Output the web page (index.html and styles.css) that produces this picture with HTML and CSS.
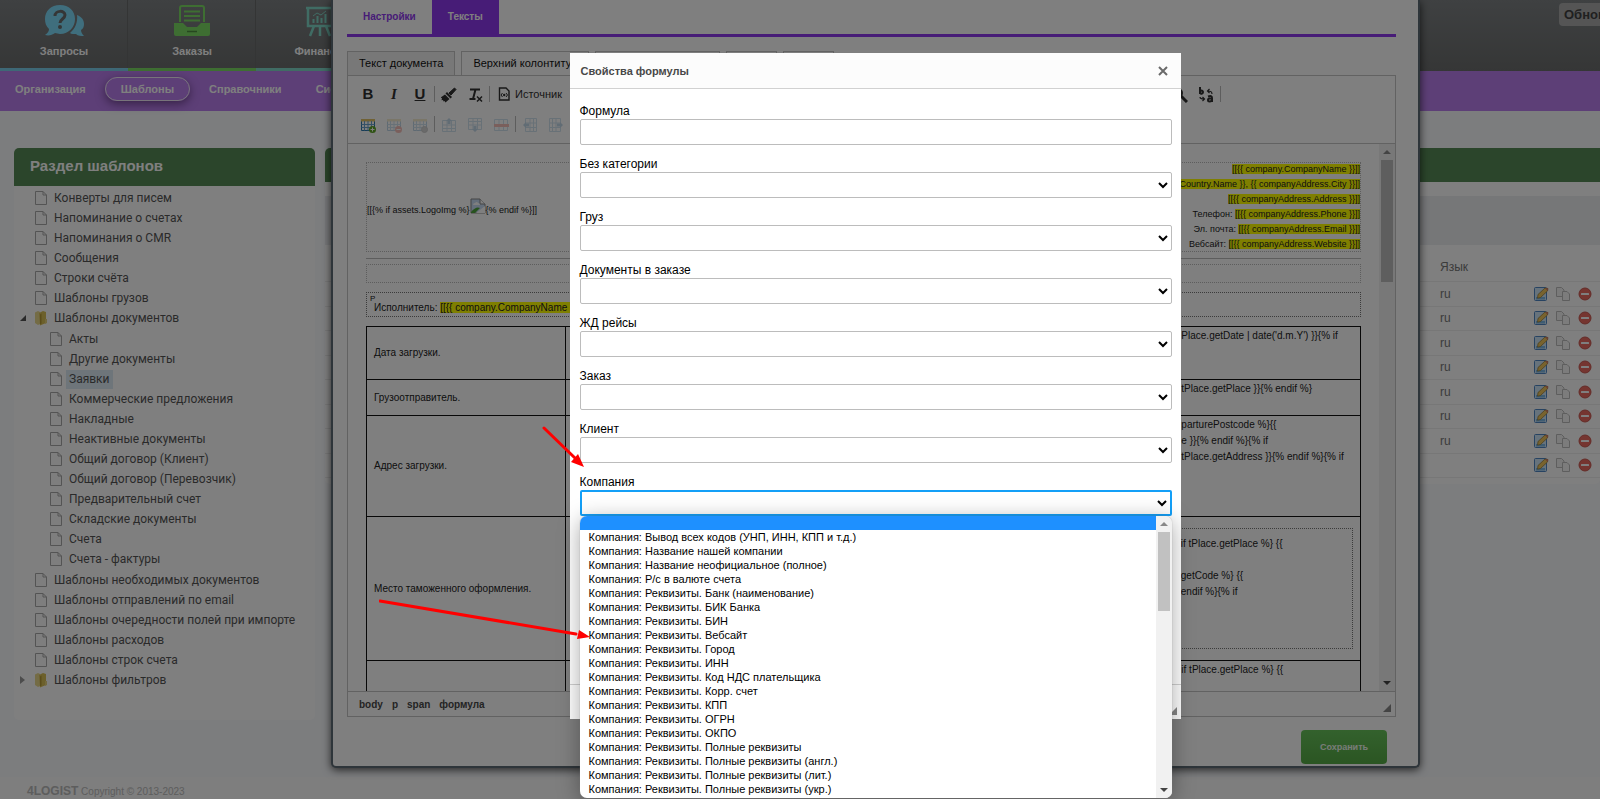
FILE: index.html
```html
<!DOCTYPE html>
<html lang="ru">
<head>
<meta charset="UTF-8">
<meta name="viewport" content="width=device-width, initial-scale=1.0">
<title>4LOGIST - Шаблоны</title>
<link rel="stylesheet" href="styles.css">
</head>
<body>

<!-- icons -->
<svg class="sprite" width="0" height="0" aria-hidden="true">
  <symbol id="i-file" viewBox="0 0 14 16">
    <path d="M1.500 1.500h7.500l3.500 3.500v9.500h-11z" fill="#fdfdfd" stroke="#a8a8a8"/>
    <path d="M9 1.500v3.500h3.500" fill="none" stroke="#a8a8a8"/>
  </symbol>
  <symbol id="i-folder" viewBox="0 0 14 16">
    <path d="M1 2.500l3-1.500 2 1v12l-2 1-3-2z" fill="#e9d88c"/>
    <path d="M5 3l4-2 3 1v11l-6 2.500z" fill="#d9c057"/>
    <path d="M6 4.500l1.500-1v10l-1.500 1z" fill="#b69a36"/>
    <path d="M11 9h2v4l-2 1z" fill="#e6d27e"/>
  </symbol>
  <symbol id="i-edit" viewBox="0 0 16 16">
    <rect x="1.500" y="1.500" width="12" height="13" rx="1" fill="#cfe6f8" stroke="#4e87c4"/>
    <path d="M3 11h9v2.500h-9z" fill="#7db8e4"/>
    <path d="M5 8.500l7-6.500 3 .5-.5 2.500-7 6.500-3 .7z" fill="#f1c65c" stroke="#8c7430" stroke-width=".7"/>
    <path d="M12 2l3 .5-.5 2.500z" fill="#d6766b"/>
  </symbol>
  <symbol id="i-copy" viewBox="0 0 16 16">
    <path d="M1.500 1.500h5l2.500 2.500v6.500h-7.500z" fill="#f4f4f4" stroke="#bdbdbd"/>
    <path d="M7.500 5.500h4.500l2.500 2.500v6.500h-7z" fill="#f8f8f8" stroke="#bdbdbd"/>
  </symbol>
  <symbol id="i-del" viewBox="0 0 16 16">
    <circle cx="8" cy="8" r="6" fill="#ea6a60" stroke="#c9574f"/>
    <rect x="4" y="7" width="8" height="2" rx=".5" fill="#fff"/>
  </symbol>
  <symbol id="i-grid" viewBox="0 0 16 16">
    <path d="M1.500 2.500h13v11h-13z" fill="#fff" stroke="#2d78ad"/>
    <path d="M1 2h14v2.500h-14z" fill="#e0c268"/>
    <path d="M1.500 7.500h13M1.500 10.500h13M4.500 4v9.500M8 4v9.500M11.500 4v9.500" stroke="#6ba2cc" fill="none"/>
  </symbol>
</svg>

<header class="top">
  <a class="top-item blue" href="#">
    <svg width="40" height="32" viewBox="0 0 40 32">
      <path d="M33 10c5 2 7 5 7 9 0 3-1 5-3 6 0 2 1 4 3 6-3 0-6 0-8-2h-3q-2 0-3-1c5-4 8-11 7-18z" fill="#7fdcfb"/>
      <path d="M16 0c9 0 15 6 15 14s-6 15-15 15l-5-1c-3 2-6 3-10 2 3-2 4-4 4-6-3-3-4-6-4-10 0-8 6-14 15-14z" fill="#7fdcfb"/>
      <path d="M11 11c0-6 10-6 10-1 0 4-5 4-5 8" fill="none" stroke="#6b6d6d" stroke-width="3"/>
      <circle cx="16" cy="22" r="2" fill="#6b6d6d"/>
    </svg>
    <span>Запросы</span>
  </a>
  <a class="top-item green" href="#">
    <svg width="36" height="32" viewBox="0 0 36 32">
      <path d="M6 17v-14q0-2 2-2h20q2 0 2 2v14" fill="none" stroke="#7cdc64" stroke-width="2"/>
      <path d="M10 6.500h16M10 11h16M10 15.500h16" stroke="#7cdc64" stroke-width="2"/>
      <path d="M0 18h9l4 4h10l4-4h9v11q0 2-2 2h-32q-2 0-2-2z" fill="#7cdc64"/>
      <path d="M13 26.500h10" stroke="#4c8f3f" stroke-width="1.500"/>
    </svg>
    <span>Заказы</span>
  </a>
  <a class="top-item teal" href="#">
    <svg width="30" height="32" viewBox="0 0 30 32">
      <path d="M1 3h28M3 4v17h24v-17M9 21l-4 10M21 21l4 10M15 21v10" fill="none" stroke="#80d8c8" stroke-width="2.500"/>
      <path d="M8.500 14v4M12.500 11v7M16.500 13v5M20.500 9v9" stroke="#80d8c8" stroke-width="2"/>
      <path d="M8 11l4-3 4 2 5-4" fill="none" stroke="#80d8c8"/>
    </svg>
    <span>Финансы</span>
  </a>
  <button class="update-btn">Обновить</button>
</header>

<nav class="nav">
  <a href="#">Организация</a>
  <a href="#" class="active">Шаблоны</a>
  <a href="#">Справочники</a>
  <a href="#">Система</a>
</nav>

<main class="main">
  <section class="panel tree-panel">
    <h2>Раздел шаблонов</h2>
    <ul class="tree">
      <li><svg><use href="#i-file"/></svg><a href="#">Конверты для писем</a></li>
      <li><svg><use href="#i-file"/></svg><a href="#">Напоминание о счетах</a></li>
      <li><svg><use href="#i-file"/></svg><a href="#">Напоминания о CMR</a></li>
      <li><svg><use href="#i-file"/></svg><a href="#">Сообщения</a></li>
      <li><svg><use href="#i-file"/></svg><a href="#">Строки счёта</a></li>
      <li><svg><use href="#i-file"/></svg><a href="#">Шаблоны грузов</a></li>
      <li><i class="arrow open"></i><svg><use href="#i-folder"/></svg><a href="#">Шаблоны документов</a></li>
    </ul>
    <ul class="tree sub">
      <li><svg><use href="#i-file"/></svg><a href="#">Акты</a></li>
      <li><svg><use href="#i-file"/></svg><a href="#">Другие документы</a></li>
      <li><svg><use href="#i-file"/></svg><a href="#" class="selected">Заявки</a></li>
      <li><svg><use href="#i-file"/></svg><a href="#">Коммерческие предложения</a></li>
      <li><svg><use href="#i-file"/></svg><a href="#">Накладные</a></li>
      <li><svg><use href="#i-file"/></svg><a href="#">Неактивные документы</a></li>
      <li><svg><use href="#i-file"/></svg><a href="#">Общий договор (Клиент)</a></li>
      <li><svg><use href="#i-file"/></svg><a href="#">Общий договор (Перевозчик)</a></li>
      <li><svg><use href="#i-file"/></svg><a href="#">Предварительный счет</a></li>
      <li><svg><use href="#i-file"/></svg><a href="#">Складские документы</a></li>
      <li><svg><use href="#i-file"/></svg><a href="#">Счета</a></li>
      <li><svg><use href="#i-file"/></svg><a href="#">Счета - фактуры</a></li>
    </ul>
    <ul class="tree">
      <li><svg><use href="#i-file"/></svg><a href="#">Шаблоны необходимых документов</a></li>
      <li><svg><use href="#i-file"/></svg><a href="#">Шаблоны отправлений по email</a></li>
      <li><svg><use href="#i-file"/></svg><a href="#">Шаблоны очередности полей при импорте</a></li>
      <li><svg><use href="#i-file"/></svg><a href="#">Шаблоны расходов</a></li>
      <li><svg><use href="#i-file"/></svg><a href="#">Шаблоны строк счета</a></li>
      <li><i class="arrow"></i><svg><use href="#i-folder"/></svg><a href="#">Шаблоны фильтров</a></li>
    </ul>
  </section>

  <section class="panel list-panel">
    <h2></h2>
    <div class="filter"></div>
    <table class="templates">
      <thead>
        <tr><th></th><th class="lang">Язык</th><th class="actions"></th></tr>
      </thead>
      <tbody>
        <tr><td></td><td>ru</td><td class="actions"><svg><use href="#i-edit"/></svg><svg><use href="#i-copy"/></svg><svg><use href="#i-del"/></svg></td></tr>
        <tr><td></td><td>ru</td><td class="actions"><svg><use href="#i-edit"/></svg><svg><use href="#i-copy"/></svg><svg><use href="#i-del"/></svg></td></tr>
        <tr><td></td><td>ru</td><td class="actions"><svg><use href="#i-edit"/></svg><svg><use href="#i-copy"/></svg><svg><use href="#i-del"/></svg></td></tr>
        <tr><td></td><td>ru</td><td class="actions"><svg><use href="#i-edit"/></svg><svg><use href="#i-copy"/></svg><svg><use href="#i-del"/></svg></td></tr>
        <tr><td></td><td>ru</td><td class="actions"><svg><use href="#i-edit"/></svg><svg><use href="#i-copy"/></svg><svg><use href="#i-del"/></svg></td></tr>
        <tr><td></td><td>ru</td><td class="actions"><svg><use href="#i-edit"/></svg><svg><use href="#i-copy"/></svg><svg><use href="#i-del"/></svg></td></tr>
        <tr><td></td><td>ru</td><td class="actions"><svg><use href="#i-edit"/></svg><svg><use href="#i-copy"/></svg><svg><use href="#i-del"/></svg></td></tr>
        <tr><td></td><td></td><td class="actions"><svg><use href="#i-edit"/></svg><svg><use href="#i-copy"/></svg><svg><use href="#i-del"/></svg></td></tr>
      </tbody>
    </table>
  </section>
</main>

<footer class="footer"><b>4LOGIST</b> Copyright © 2013-2023</footer>

<!-- template window -->
<div class="window">
  <div class="tabs">
    <a href="#">Настройки</a>
    <a href="#" class="active">Тексты</a>
  </div>

  <div class="doc-tabs">
    <button>Текст документа</button>
    <button>Верхний колонтитул</button>
    <button class="w-l"></button>
    <button class="w-s"></button>
    <button class="w-s"></button>
  </div>

  <div class="editor">
    <div class="toolbar">
      <div class="tool-row">
        <button class="b" aria-label="Полужирный">B</button>
        <button class="it" aria-label="Курсив">I</button>
        <button class="u" aria-label="Подчеркнутый">U</button>
        <i class="sep"></i>
        <button aria-label="Копировать форматирование">
          <svg viewBox="0 0 16 16"><path d="M13.500 1l1.500 1.500-5 5.500-2-2z" fill="#303030" stroke="#303030"/><path d="M6 5l5 5-1.500 1.500-5-5z" fill="#303030"/><path d="M4 7.500l4.500 4.500-4 3.500-1-1.500-1 .5-.5-1.500-1.500.3.500-2-1.500-.8z" fill="#303030"/></svg>
        </button>
        <button aria-label="Убрать форматирование">
          <svg viewBox="0 0 16 16"><path d="M3 2.500h10M8.500 2.500l-2.500 9.500M2.500 12h6" stroke="#303030" stroke-width="2" fill="none"/><path d="M10 9.500l5 5M15 9.500l-5 5" stroke="#303030" stroke-width="1.500"/></svg>
        </button>
        <i class="sep"></i>
        <button class="source">
          <svg viewBox="0 0 16 16"><path d="M3.500 2h6.500l3 3v9h-9.500z" fill="none" stroke="#303030" stroke-width="1.400"/><path d="M6.500 7l-1.500 2 1.500 2M10 7l1.500 2-1.500 2" fill="none" stroke="#303030"/><circle cx="8.200" cy="9" r="1.200" fill="#303030"/></svg>
          Источник
        </button>
        <div class="tools-end">
          <button aria-label="Найти">
            <svg viewBox="0 0 16 16"><circle cx="6" cy="6" r="4" fill="none" stroke="#303030" stroke-width="2"/><path d="M9 9l6 6" stroke="#303030" stroke-width="3"/></svg>
          </button>
          <button aria-label="Заменить">
            <svg viewBox="0 0 16 16"><path d="M2 0v7M2 5a1.500 1.500 0 1 0 2.500-1 1.500 1.500 0 0 0-2.500 1" fill="none" stroke="#303030" stroke-width="2"/><path d="M14 7q0-3-4-3M11.500 2l-2 2 2 2M2 10q0 2 4 2M4.500 10l2 2-2 2" fill="none" stroke="#303030" stroke-width="1.200"/><path d="M10 9.500q4-1.500 4 1.500v4M14 11.500h-2.500a1.500 1.500 0 1 0 0 3q2.500 0 2.500-2" fill="none" stroke="#303030" stroke-width="2"/></svg>
          </button>
          <i class="sep"></i>
        </div>
      </div>
      <div class="tool-row">
        <button aria-label="Таблица"><svg viewBox="0 0 16 16"><use href="#i-grid"/><circle cx="12.500" cy="12.500" r="3.500" fill="#5ea628"/><path d="M10.500 12.500h4M12.500 10.500v4" stroke="#fff"/></svg></button>
        <button disabled aria-label="Удалить таблицу"><svg viewBox="0 0 16 16"><use href="#i-grid"/><circle cx="12.500" cy="12.500" r="3.500" fill="#e0301c"/><path d="M10.500 12.500h4" stroke="#fff"/></svg></button>
        <button disabled aria-label="Свойства таблицы"><svg viewBox="0 0 16 16"><use href="#i-grid"/><circle cx="12.500" cy="12.500" r="3" fill="#777" stroke="#555"/></svg></button>
        <i class="sep"></i>
        <button disabled aria-label="Вставить строку сверху"><svg viewBox="0 0 16 16"><path d="M1.500 3.500h13v11h-13zM1.500 8h13M1.500 11.500h13M6 3.500v11M10.500 3.500v11" fill="none" stroke="#6ba2cc"/><path d="M8 1l3 3h-1.500v3h-3v-3h-1.500z" fill="#3a80b8"/></svg></button>
        <button disabled aria-label="Вставить строку снизу"><svg viewBox="0 0 16 16"><path d="M1.500 1.500h13v11h-13zM1.500 4.500h13M1.500 8h13M6 1.500v11M10.500 1.500v11" fill="none" stroke="#6ba2cc"/><path d="M8 15l3-3h-1.500v-3h-3v3h-1.500z" fill="#3a80b8"/></svg></button>
        <button disabled aria-label="Удалить строку"><svg viewBox="0 0 16 16"><path d="M1.500 2.500h13v11h-13zM6 2.500v11M10.500 2.500v11" fill="none" stroke="#6ba2cc"/><path d="M1 7h15v3h-15z" fill="#e0301c"/></svg></button>
        <i class="sep"></i>
        <button disabled aria-label="Вставить столбец слева"><svg viewBox="0 0 16 16"><path d="M3.500 1.500h11v13h-11zM8 1.500v13M11.500 1.500v13M3.500 6h11M3.500 10.500h11" fill="none" stroke="#6ba2cc"/><path d="M1 8l3-3v1.500h3v3h-3v1.500z" fill="#3a80b8"/></svg></button>
        <button disabled aria-label="Вставить столбец справа"><svg viewBox="0 0 16 16"><path d="M1.500 1.500h11v13h-11zM4.500 1.500v13M8 1.500v13M1.500 6h11M1.500 10.500h11" fill="none" stroke="#6ba2cc"/><path d="M15 8l-3-3v1.500h-3v3h3v1.500z" fill="#3a80b8"/></svg></button>
      </div>
    </div>

    <div class="edit-area">
      <div class="doc">
        <div class="doc-head">
          <div class="logo-cell">
            <span>[[{% if assets.LogoImg %}</span><svg class="broken" viewBox="0 0 16 16"><path d="M1 1h9l5 5v9h-14z" fill="#c8dcf4" stroke="#8a8a8a"/><path d="M10 1v5h5" fill="#fff" stroke="#8a8a8a"/><path d="M3 7q0-2 2-2 2-2 3 0 2 0 2 2z" fill="#fff"/><path d="M1 14q5-6 9-4l-5 5h-4z" fill="#4ea53c"/><path d="M15 8l-9 7h9z" fill="#fff"/></svg><span>{% endif %}]]</span>
          </div>
          <div class="contacts">
            <p><mark>[[{{ company.CompanyName }}]]</mark></p>
            <p><mark>[[{{ companyAddress.Country.Name }}, {{ companyAddress.City }}]]</mark></p>
            <p><mark>[[{{ companyAddress.Address }}]]</mark></p>
            <p>Телефон: <mark>[[{{ companyAddress.Phone }}]]</mark></p>
            <p>Эл. почта: <mark>[[{{ companyAddress.Email }}]]</mark></p>
            <p>Вебсайт: <mark>[[{{ companyAddress.Website }}]]</mark></p>
          </div>
        </div>
        <div class="rule"></div>
        <div class="doc-title"></div>
        <div class="executor"><small>P</small>Исполнитель: <mark>[[{{ company.CompanyName }}]]</mark></div>
        <table class="order">
          <tbody>
            <tr class="r1"><td>Дата загрузки.</td><td><p>Place.getDate | date('d.m.Y') }}{% if</p></td></tr>
            <tr class="r2"><td>Грузоотправитель.</td><td><p>tPlace.getPlace }}{% endif %}</p></td></tr>
            <tr class="r3"><td>Адрес загрузки.</td><td><p>parturePostcode %}{{<br>e }}{% endif %}{% if<br>tPlace.getAddress }}{% endif %}{% if</p></td></tr>
            <tr class="r4"><td>Место таможенного оформления.</td><td><div class="dotted"><p>if tPlace.getPlace %} {{<br><br>getCode %} {{<br>endif %}{% if</p></div></td></tr>
            <tr class="r5"><td></td><td><p>if tPlace.getPlace %} {{</p></td></tr>
          </tbody>
        </table>
      </div>
      <div class="scroll"><i class="up"></i><i class="thumb"></i><i class="down"></i></div>
    </div>

    <div class="path">
      <span>body</span><span>p</span><span>span</span><span>формула</span>
      <i class="resizer"></i>
    </div>
  </div>

  <div class="window-footer"><button class="save">Сохранить</button></div>
</div>

<div class="overlay"></div>

<!-- formula dialog -->
<div class="dialog-layer">
  <form class="dialog" role="dialog">
    <div class="dialog-head">
      <span>Свойства формулы</span>
      <button type="button" class="close" aria-label="Закрыть"><svg width="10" height="10" viewBox="0 0 10 10"><path d="M1 1l8 8M9 1l-8 8" stroke="#6a6a6a" stroke-width="2"/></svg></button>
    </div>
    <div class="dialog-body">
      <div class="field"><label for="formula">Формула</label><input type="text" id="formula"></div>
      <div class="field"><label for="nocat">Без категории</label><select id="nocat"></select></div>
      <div class="field"><label for="cargo">Груз</label><select id="cargo"></select></div>
      <div class="field"><label for="docs">Документы в заказе</label><select id="docs"></select></div>
      <div class="field"><label for="rail">ЖД рейсы</label><select id="rail"></select></div>
      <div class="field"><label for="order">Заказ</label><select id="order"></select></div>
      <div class="field"><label for="client">Клиент</label><select id="client"></select></div>
      <div class="field">
        <label for="company">Компания</label><select id="company" class="focused"></select>
        <div class="dropdown">
          <ul>
            <li class="current"></li>
            <li>Компания: Вывод всех кодов (УНП, ИНН, КПП и т.д.)</li>
            <li>Компания: Название нашей компании</li>
            <li>Компания: Название неофициальное (полное)</li>
            <li>Компания: Р/с в валюте счета</li>
            <li>Компания: Реквизиты. Банк (наименование)</li>
            <li>Компания: Реквизиты. БИК Банка</li>
            <li>Компания: Реквизиты. БИН</li>
            <li>Компания: Реквизиты. Вебсайт</li>
            <li>Компания: Реквизиты. Город</li>
            <li>Компания: Реквизиты. ИНН</li>
            <li>Компания: Реквизиты. Код НДС плательщика</li>
            <li>Компания: Реквизиты. Корр. счет</li>
            <li>Компания: Реквизиты. КПП</li>
            <li>Компания: Реквизиты. ОГРН</li>
            <li>Компания: Реквизиты. ОКПО</li>
            <li>Компания: Реквизиты. Полные реквизиты</li>
            <li>Компания: Реквизиты. Полные реквизиты (англ.)</li>
            <li>Компания: Реквизиты. Полные реквизиты (лит.)</li>
            <li>Компания: Реквизиты. Полные реквизиты (укр.)</li>
          </ul>
          <div class="scroll light"><i class="up"></i><i class="thumb"></i><i class="down"></i></div>
        </div>
      </div>
    </div>
    <div class="dialog-foot"><i class="resizer"></i></div>
  </form>
</div>

<!-- pointers -->
<svg class="pointers" width="230" height="230" viewBox="0 0 230 230" aria-hidden="true">
  <path d="M165 7l32 31M1 180l196 33" stroke="#f00" stroke-width="3" stroke-linecap="round"/>
  <path d="M205 46l-13-5 7-8zM211 216l-13 2 2-9z" fill="#f00"/>
</svg>

</body>
</html>
```
FILE: styles.css
```css
* {
  box-sizing: border-box;
}
body {
  margin: 0;
  min-height: 100vh;
  display: flex;
  flex-direction: column;
  position: relative;
  overflow: hidden;
  font-family: "Liberation Sans", Arial, sans-serif;
  font-size: 12px;
  color: #222;
  background: #f8fafd;
}
a {
  color: inherit;
  text-decoration: none;
}
button {
  font-family: inherit;
  padding: 0;
  border: 0;
  background: none;
}
ul {
  list-style: none;
  margin: 0;
  padding: 0;
}
p {
  margin: 0;
}
.sprite {
  position: absolute;
}

/* top menu */
.top {
  display: flex;
  height: 71px;
  background: linear-gradient(#7e8284, #6b6d6d);
}
.top-item {
  width: 128px;
  padding-top: 5px;
  display: flex;
  flex-direction: column;
  align-items: center;
  gap: 6px;
  font-size: 11px;
  font-weight: bold;
  line-height: 16px;
  border-bottom: 3px solid;
  box-shadow: inset -1px 0 #686a6b;
}
.top-item span {
  color: #fff;
}
.top-item.blue {
  border-bottom-color: #7cd0ec;
}
.top-item.green {
  border-bottom-color: #7cdc64;
}
.top-item.teal {
  border-bottom-color: #80d8c8;
}
.update-btn {
  margin: 3px 0 0 auto;
  width: 41px;
  height: 23px;
  padding-left: 5px;
  text-align: left;
  overflow: hidden;
  border-radius: 4px 0 0 4px;
  background: #aaabab;
  color: #404040;
  font-size: 13px;
  font-weight: bold;
}

.nav {
  display: flex;
  align-items: flex-start;
  gap: 4px;
  height: 40px;
  padding-top: 6px;
  background: #ba7eee;
}
.nav a {
  padding: 0 14px;
  line-height: 22px;
  border: 1px solid transparent;
  border-radius: 12px;
  color: #fff;
  font-size: 11px;
  font-weight: bold;
}
.nav a.active {
  padding: 0 15px;
  border-color: #f0e8f6;
  box-shadow: 0 3px 10px rgba(60, 30, 80, .6);
}

/* panels */
.main {
  flex: 1;
  display: flex;
  align-items: flex-start;
  gap: 10px;
  padding: 37px 0 0 14px;
}
.panel {
  background: #fff;
  border-radius: 5px;
}
.panel h2 {
  margin: 0;
  height: 38px;
  padding-left: 16px;
  line-height: 36px;
  font-size: 15px;
  color: #fff;
  background: #568a56;
  border-radius: 5px 5px 0 0;
}
.tree-panel {
  flex: none;
  width: 301px;
  padding-bottom: 30px;
}
.tree {
  padding: 1px 0 0 20px;
  font-family: Roboto, sans-serif;
  font-size: 12px;
  color: #555;
}
.panel h2 + .tree {
  padding-top: 2px;
}
.tree.sub {
  padding-left: 35px;
}
.tree li {
  position: relative;
  display: flex;
  align-items: center;
  height: 20px;
  white-space: nowrap;
}
.tree svg {
  width: 14px;
  height: 16px;
  margin-right: 3px;
}
.tree a {
  line-height: 19px;
  padding: 0 3px;
}
.tree a.selected {
  background: #dcebf5;
}
.arrow {
  position: absolute;
  left: -14px;
  border: 4px solid transparent;
  border-left: 5px solid #999;
}
.arrow.open {
  border: 3px solid #555;
  border-top-color: transparent;
  border-left-color: transparent;
}

.list-panel {
  flex: 1;
  padding-bottom: 6px;
}
.list-panel h2 {
  height: 34px;
  border-radius: 5px 0 0 0;
}
.filter {
  height: 49px;
  margin: 14px 0 8px;
  background: #eceef1;
}
.templates {
  width: 100%;
  table-layout: fixed;
  border-collapse: collapse;
  color: #777;
}
.templates th,
.templates td {
  height: 25px;
  padding: 0;
  text-align: left;
  font-weight: normal;
  border-bottom: 1px solid #eee;
}
.templates tr:nth-child(even) td {
  height: 24px;
}
.templates th {
  height: 28px;
}
.templates .lang {
  width: 60px;
}
.templates .actions {
  width: 100px;
  padding-right: 7px;
  text-align: right;
}
.actions svg {
  width: 16px;
  height: 16px;
  margin-left: 6px;
  vertical-align: middle;
}
.footer {
  height: 22px;
  padding: 6px 0 0 27px;
  line-height: 16px;
  font-size: 10px;
  color: #bbb;
  background: #fcfcfc;
}
.footer b {
  font-size: 12px;
}

/* template window */
.window {
  position: absolute;
  top: 0;
  left: 331px;
  right: 180px;
  padding: 0 22px 2px 14px;
  background: #fff;
  border: 2px solid #5c6a74;
  border-top: 0;
  border-radius: 0 0 5px 5px;
  box-shadow: 0 2px 8px rgba(0, 0, 0, .7);
}
.tabs {
  display: flex;
  height: 37px;
  border-bottom: 3px solid #8f38ee;
}
.tabs a {
  padding: 0 16px;
  line-height: 33px;
  font-size: 10px;
  font-weight: bold;
  color: #8f38ee;
}
.tabs a.active {
  background: #8f38ee;
  color: #fff;
}
.doc-tabs {
  display: flex;
  gap: 6px;
  margin-top: 14px;
}
.doc-tabs button {
  height: 24px;
  padding: 0 11px 2px;
  border: 1px solid #c4c4c4;
  border-bottom: 0;
  font-size: 11px;
  color: #111;
}
.doc-tabs .w-l {
  width: 125px;
}
.doc-tabs .w-s {
  width: 51px;
}
.doc-tabs button:first-child {
  background: #f0f0f0;
}
.editor {
  border: 1px solid #c4c4c4;
}
.toolbar {
  height: 68px;
  padding: 3px 7px;
  border-bottom: 1px solid #c4c4c4;
}
.tool-row {
  display: flex;
  align-items: center;
  height: 30px;
}
.tool-row button {
  width: 26px;
  height: 26px;
  font-size: 15px;
  line-height: 16px;
  color: #303030;
}
.tool-row svg {
  width: 16px;
  height: 16px;
  vertical-align: middle;
}
.tool-row button:disabled {
  opacity: .3;
}
.tool-row .b {
  font-weight: bold;
}
.tool-row .it {
  font-family: "Liberation Serif", serif;
  font-style: italic;
  font-weight: bold;
}
.tool-row .u {
  font-weight: bold;
  text-decoration: underline;
}
.tool-row .source {
  display: flex;
  align-items: center;
  gap: 3px;
  width: auto;
  padding-left: 5px;
  font-size: 11px;
}
.sep {
  width: 1px;
  height: 16px;
  margin: 0 1px;
  background: #bbb;
}
.tools-end {
  display: flex;
  align-items: center;
  margin: 0 166px 0 auto;
}
.edit-area {
  display: flex;
  height: 547px;
  overflow: hidden;
}
.doc {
  flex: 1;
  padding: 18px 18px 0;
  font-size: 10px;
  line-height: 16px;
}
.doc mark {
  background: #ff0;
  color: inherit;
}
.doc-head {
  display: flex;
  justify-content: space-between;
  align-items: center;
  height: 90px;
  border: 1px dotted #bbb;
  font-size: 9px;
}
.logo-cell {
  display: flex;
  align-items: center;
  padding-top: 5px;
}
.broken {
  width: 16px;
  height: 16px;
  margin-bottom: 8px;
}
.contacts {
  text-align: right;
}
.contacts p {
  line-height: 15px;
}
.rule {
  height: 1px;
  margin: 6px 0 5px;
  background: #bbb;
}
.doc-title {
  height: 19px;
  border: 1px dotted #bbb;
}
.executor {
  position: relative;
  height: 25px;
  margin: 9px 0;
  padding: 7px 7px 0;
  border: 1px dotted #777;
}
.executor small {
  position: absolute;
  top: 2px;
  left: 3px;
  font-size: 8px;
  line-height: 8px;
}
.order {
  width: 100%;
  table-layout: fixed;
  border-collapse: collapse;
}
.order td {
  padding: 1px 7px;
  border: 1px solid #111;
  vertical-align: top;
}
.order td:first-child {
  width: 20%;
  vertical-align: middle;
}
.order p {
  margin-left: 78%;
  white-space: nowrap;
}
.order .r1 {
  height: 53px;
}
.order .r2 {
  height: 36px;
}
.order .r3 {
  height: 101px;
}
.order .r4 {
  height: 144px;
}
.order .r5 {
  height: 60px;
}
.dotted {
  height: 121px;
  margin-top: 10px;
  padding-top: 7px;
  border: 1px dotted #777;
}
.path {
  display: flex;
  align-items: center;
  gap: 9px;
  position: relative;
  height: 25px;
  padding: 0 11px;
  font-size: 10px;
  font-weight: bold;
  color: #484848;
  border-top: 1px solid #c4c4c4;
}
.resizer {
  position: absolute;
  right: 4px;
  bottom: 4px;
  border: 4px solid #888;
  border-top-color: transparent;
  border-left-color: transparent;
}
.window-footer {
  display: flex;
  justify-content: flex-end;
  padding: 13px 9px 0 0;
}
.save {
  width: 86px;
  height: 34px;
  border-radius: 4px;
  background: linear-gradient(#67c35a, #56ab45);
  color: #f0f8ee;
  font-size: 9px;
  font-weight: bold;
}

/* scrollbars */
.scroll {
  display: flex;
  flex-direction: column;
  align-items: center;
  width: 16px;
  padding: 6px 0;
  background: #f1f1f1;
}
.scroll .thumb {
  width: 12px;
  height: 122px;
  margin-top: 6px;
  background: #bcbcbc;
}
.scroll .up,
.scroll .down {
  border: 4px solid transparent;
  border-top-width: 0;
  border-bottom-color: #888;
}
.scroll .down {
  margin-top: auto;
  border-top: 4px solid #444;
  border-bottom-width: 0;
}

.overlay {
  position: absolute;
  inset: 0;
  background: rgba(0, 0, 0, .5);
}

/* formula dialog */
.dialog-layer {
  position: absolute;
  top: 53px;
  left: 331px;
  right: 181px;
  display: flex;
  justify-content: center;
}
.dialog {
  width: 611px;
  background: #fff;
  color: #000;
}
.dialog-head {
  display: flex;
  align-items: center;
  justify-content: space-between;
  height: 36px;
  padding: 0 13px 0 11px;
  background: #fcfcfc;
  border-bottom: 1px solid #d1d1d1;
  font-size: 11px;
  font-weight: bold;
  color: #484848;
}
.close {
  width: 10px;
  height: 10px;
  display: flex;
}
.dialog-body {
  height: 595px;
  padding: 14px 9px 0 10px;
}
.field {
  position: relative;
  height: 53px;
}
.field label {
  display: block;
  line-height: 16px;
}
.field input,
.field select {
  display: block;
  width: 100%;
  height: 26px;
  border: 1px solid #bcbcbc;
  border-radius: 2px;
  background: #fff;
}
.field select.focused {
  border: 2px solid #139ff7;
}
.dropdown {
  position: absolute;
  z-index: 1;
  top: 42px;
  left: 0;
  right: 0;
  display: flex;
  height: 282px;
  background: #fff;
  border-radius: 7px;
  overflow: hidden;
  box-shadow: 0 0 1px #888, 0 4px 22px rgba(0, 0, 0, .35);
}
.dropdown ul {
  flex: 1;
}
.dropdown li {
  height: 14px;
  padding-left: 9px;
  line-height: 14px;
  font-size: 11px;
}
.dropdown .current {
  background: #1e90ff;
}
.scroll.light .thumb {
  height: 79px;
  background: #c1c1c1;
}
.dialog-foot {
  position: relative;
  height: 35px;
  border-top: 1px solid #d1d1d1;
}

.pointers {
  position: absolute;
  z-index: 2;
  top: 421px;
  left: 379px;
  fill: none;
}
```
